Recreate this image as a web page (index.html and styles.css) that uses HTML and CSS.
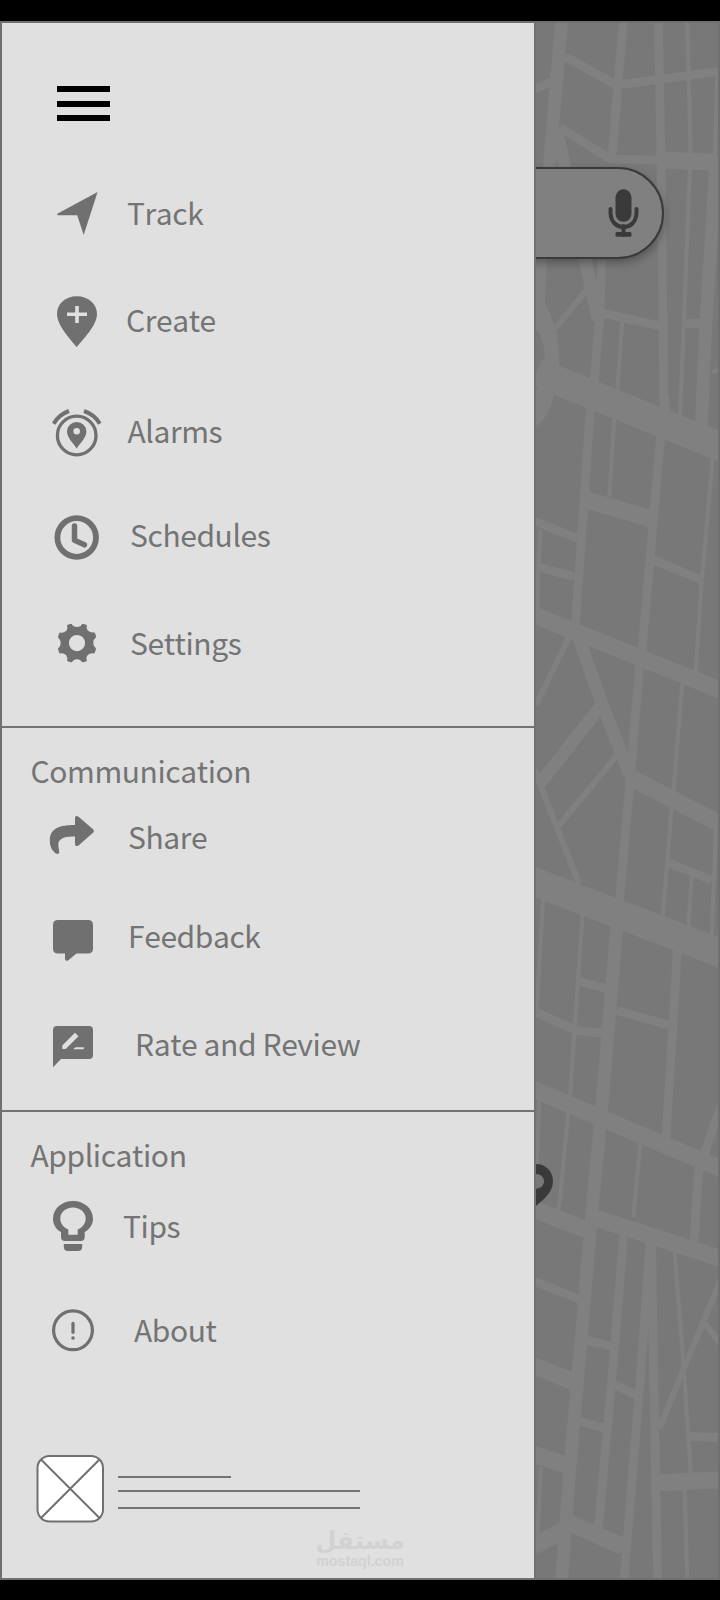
FILE: index.html
```html
<!DOCTYPE html>
<html lang="en">
<head>
<meta charset="utf-8">
<title>Navigation drawer</title>
<link rel="stylesheet" href="styles.css">
</head>
<body>
<div class="screen">
  <nav class="drawer">
    <button class="menu" aria-label="Menu"><span></span><span></span><span></span></button>
    <section class="group main">
      <a class="row track"><svg viewBox="46 182 68 60"><path d="M97.6 192 83.7 235 77.2 215.3H57.3v-1.6z"/></svg><span>Track</span></a>
      <a class="row create"><svg viewBox="46 289 68 60"><path d="M76.7 347C70 339 57 325 57 314c0-10 8-17.8 19.8-17.8S97 304 97 314c0 11-13.500 25-20.300 33z"/><path class="cut" d="M77 306v17M67 314.300h20"/></svg><span>Create</span></a>
      <a class="row alarms"><svg viewBox="46 400 68 60"><circle class="line" cx="76.700" cy="435.500" r="19.300" stroke-width="3.300"/><path class="line" stroke-width="4" d="M53.700 423.700Q59 414.500 69 411M84 411Q94.500 414.500 99.800 423.700"/><path fill-rule="evenodd" d="M76.700 448.500C73.500 443.500 67 437.500 67 431.500a9.700 9.500 0 0 1 19.400 0c0 6-6.500 12-9.700 17zM76.700 428a3.300 3.300 0 1 0 0 6.600 3.300 3.300 0 0 0 0-6.600z"/></svg><span>Alarms</span></a>
      <a class="row schedules"><svg viewBox="46 504 68 60"><circle class="line" cx="76.700" cy="537.500" r="19.300" stroke-width="5.800"/><path class="line round" stroke-width="5.500" d="M74.500 526v14.200l9.900 4.600"/></svg><span>Schedules</span></a>
      <a class="row settings"><svg viewBox="46 612 68 60"><path fill-rule="evenodd" d="M66.800 625.400Q69 623.800 71.800 624Q73 627 77 627Q81 627 82 624Q85 623.800 87 625.400Q85.700 628.200 87.800 630.500Q91 633.300 94.600 632.400Q96 634.600 96 637.300Q93.300 639.200 93.300 643Q93.300 646.500 96 648.300Q95.700 651 94.300 653.500Q90.500 652.500 87.800 655Q85.500 657.800 87 660.700Q84.700 662.300 82 662.200Q80.500 659.300 77 659.300Q73.500 659.300 72 662.200Q69.300 662.300 67 660.700Q68 657.500 66 655Q63.500 652.500 59.700 653.500Q58.200 651.200 58 648.500Q60.700 646.500 60.700 643Q60.700 639.500 58 637.500Q58.200 634.700 59.700 632.400Q63.500 633.300 66 631Q68.400 628.200 66.800 625.400zM77 635a8.100 8.100 0 1 0 0 16.200 8.100 8.100 0 0 0 0-16.200z"/></svg><span>Settings</span></a>
    </section>
    <section class="group communication">
      <h2>Communication</h2>
      <a class="row share"><svg viewBox="46 805 68 60"><path d="M75 825v-7q0-3.200 3.300-1.400L93.300 829.500q1.400 1.600 0 3L78.500 845.500q-3.500 1.500-3.500-1.500v-7.400C64 836 58 839 58.300 845c.1 3 1 5 1 7.500q-1 2.300-3.500 1C51 850 49.800 845 49.800 840 50 828 60 825 75 825z"/></svg><span>Share</span></a>
      <a class="row feedback"><svg viewBox="46 905 68 60"><path d="M58 920h30q5 0 5 5v23.500q0 5-5 5H76.500l-8.500 7q-3 1-3-1.500v-5.500h-7q-5 0-5-5V925q0-5 5-5z"/></svg><span>Feedback</span></a>
      <a class="row review"><svg viewBox="46 1013 68 60"><path d="M57 1026h32q4 0 4 4v25q0 4-4 4H61l-8 8.300V1030q0-4 4-4z"/><path class="light" d="m62.300 1045.500 12.700-12.700 3.500 3.400-12.800 12.800h-3.400zM75.500 1047.300h8.300v2h-10.600z"/></svg><span>Rate and Review</span></a>
    </section>
    <section class="group application">
      <h2>Application</h2>
      <a class="row tips"><svg viewBox="46 1195 68 60"><path fill-rule="evenodd" d="M73 1201c11 0 20 7.500 20 17.700 0 6-3.500 10.500-8.300 13.300v5q0 4-4 4H65q-4 0-4-4v-5c-5-2.800-8-7.300-8-13.300 0-10.200 9-17.700 20-17.700zm0 6.500c-7.500 0-12.700 5-12.700 11 0 5.500 4 9.500 8 11v5.200h9.400v-5.200c4-1.500 8-5.500 8-11 0-6-5.200-11-12.700-11z"/><path d="M63.800 1244h18.400v2.500q0 4.500-4.500 4.500h-9.400q-4.500 0-4.500-4.500z"/></svg><span>Tips</span></a>
      <a class="row about"><svg viewBox="46 1299 68 60"><circle class="line" cx="73" cy="1330.300" r="19.400" stroke-width="3.200"/><path class="line round" stroke-width="3.200" d="M73 1323.300v9"/><circle cx="73" cy="1338" r="1.800"/></svg><span>About</span></a>
    </section>
    <div class="profile">
      <svg viewBox="0 0 68 68"><rect x="1.500" y="1" width="65.500" height="65.500" rx="12"/><path d="m5 4.500 58.500 58.500M63.500 4.500 5 63"/></svg>
      <div class="lines"><i class="short"></i><i></i><i class="last"></i></div>
    </div>
    <div class="watermark"><b lang="ar" dir="rtl">مستقل</b><span>mostaql.com</span></div>
  </nav>
  <main class="map">
    <svg class="streets" viewBox="48 69 546 4665">
      <path class="area" d="M48 780H80L75 910Q105 970 112 1010Q118 1060 117 1100L98 1200Q80 1260 48 1278z"/>
      <path class="block" d="M48 988Q75 1020 75 1080T48 1172z"/>
      <g class="w88"><path d="M50 1116 610 1344M30 2641 610 2862"/></g>
      <g class="w52"><path d="M430 480 600 488M200 1500 392 1556M40 1844 610 2074M325 2330 610 2476M30 3264 610 3509M40 3627 200 3690M200 3645 610 3778M40 4097 160 4145M40 4363 140 4395M40 4639 140 4586M150 4570 310 4640M415 4448 610 4439"/></g>
      <g class="w38"><path d="M125 60 62 800M110 390 215 870 235 960M587 500 556 1000 542 1320M175 1910 245 2110 330 2325M245 2115 60 2350M290 2780 245 3330 218 3610 185 4000 150 4400 125 4740"/></g>
      <g class="w26"><path d="M40 268 95 245M135 170 290 255 610 213M310 60 275 480M415 60 423 480 432 1230M120 382 270 477 420 480M490 970 550 970M245 780 240 930 222 1150M250 940 430 980M212 1215 165 1890M422 1310 365 1960M360 1980 325 2400 298 2710M400 1680 545 1740M40 1562 172 1615M55 1702 163 1730M445 2588 575 2640M180 2945 258 2965M40 3032 165 3090 247 3101M290 3032 450 3076M472 2850 438 3415M537 3495 522 3725M602 3320 550 3470M312 3685 285 4030 235 4585M390 3720 365 4080 312 4740M395 3715 400 4080 413 4740M40 3842 178 3898M200 4021 275 4039M285 4154 348 4185M180 4264 252 4284M510 4309 600 4313M435 1190V1230"/></g>
      <g class="w18"><path d="M200 870 105 985M150 1905 48 2115M292 2265 180 2400 110 2485M45 2310 78 2400 177 2650M555 3970 605 4035M602 3840 490 4110 418 4285"/></g>
      <g class="w12"><path d="M502 60 512 480M592 220 585 470M510 500 490 1000 480 1250M307 960 292 1170M283 1250 268 1490M579 1370 545 1740 527 2015M62 1590 55 1700 52 1825M487 2045 460 2380M455 2425 428 2750M515 2630 505 2780M588 2480 575 2810M70 2690 50 3025M188 2740 150 3285M58 3300 50 3500M145 3335 120 3600 115 3635M362 3425 345 3600 340 3650M463 3745 492 4110 512 4420M63 4400 52 4605M494 4465 502 4740M575 1118 600 1105"/></g>
      <path class="pin" fill-rule="evenodd" d="M48 3492C78 3492 99 3515 99 3543C99 3572 80 3592 48 3618zM48 3522V3566C63 3566 72 3556 72 3544S63 3522 48 3522z"/>
    </svg>
    <div class="search">
      <svg viewBox="0 0 32 50"><rect x="7.500" y="1.300" width="16" height="32.500" rx="8"/><path d="M2.500 21v3c0 10 6 15 13 15s13-5 13-15v-3"/><path d="M15.500 38v9"/><rect x="7.500" y="44" width="16" height="4.700" rx="1.500"/></svg>
    </div>
  </main>
</div>
</body>
</html>
```

FILE: styles.css
```css
* { box-sizing: border-box; }
body { margin: 0; background: #000; }
.screen {
  width: 720px;
  height: 1600px;
  padding: 21px 0 20px;
  display: flex;
  background: #000;
}
.drawer {
  width: 536px;
  height: 1559px;
  border: 2px solid #707070;
  border-right-color: #727272;
  background: #e0e0e0;
  display: flex;
  flex-direction: column;
  font-family: "Noto Sans CJK SC", "Noto Sans", sans-serif;
  font-size: 30px;
  font-weight: 400;
  font-kerning: none;
  letter-spacing: -.4px;
  color: #747474;
}
.menu {
  display: flex;
  flex-direction: column;
  gap: 8.5px;
  margin: 63px 0 0 55px;
  padding: 0;
  width: 53px;
  height: 35px;
  border: 0;
  background: none;
}
.menu span { width: 53px; height: 6px; flex: none; background: #000; }
.group { flex: none; display: flex; flex-direction: column; }
.main { height: 607px; padding-top: 61px; border-bottom: 2px solid #747474; }
.communication { height: 384px; padding-top: 22px; border-bottom: 2px solid #747474; }
.application { height: 343px; padding-top: 22px; }
h2 {
  margin: 0 0 0 28.5px;
  font: inherit;
  line-height: 40px;
  height: 40px;
}
.row {
  display: flex;
  flex: none;
  height: 60px;
  padding-left: 44px;
  line-height: 60px;
  white-space: nowrap;
}
.row svg { width: 68px; height: 60px; flex: none; fill: #707070; }
.row .line { fill: none; stroke: #707070; }
.row .round { stroke-linecap: round; stroke-linejoin: round; }
.row .cut { fill: none; stroke: #e0e0e0; stroke-width: 3.6; }
.row .light { fill: #e0e0e0; }
.row span { margin-left: 13px; }
.create { margin-top: 47px; }
.create span { margin-left: 12px; }
.alarms { margin-top: 51px; }
.alarms span { margin-left: 13.5px; }
.schedules { margin-top: 44px; }
.settings { margin-top: 48px; }
.schedules span, .settings span { margin-left: 16px; }
.share { margin-top: 15px; }
.share span, .feedback span { margin-left: 14px; }
.share span { padding-top: 1px; }
.feedback { margin-top: 40px; }
.row.review { margin-top: 48px; }
.review span { margin-left: 21px; }
.tips { margin-top: 21px; }
.tips span { margin-left: 9px; }
.about { margin-top: 44px; }
.about span { margin-left: 20px; }
.profile { display: flex; height: 68px; flex: none; margin: 0 0 0 34px; }
.profile svg { width: 68px; height: 68px; fill: #fff; stroke: #707070; stroke-width: 2; }
.lines { margin: 21px 0 0 14px; }
.lines i { display: block; width: 242px; height: 2px; margin-bottom: 12px; background: #747474; }
.lines .short { width: 113px; }
.lines .last { margin-top: 15px; }
.watermark {
  width: 88px;
  margin: 5px 0 0 314px;
  color: #d2d2d2;
  letter-spacing: 0;
  display: flex;
  flex-direction: column;
  align-items: center;
}
.watermark b { font: bold 24.5px/25px "DejaVu Sans", sans-serif; }
.watermark span { font: bold 14.2px/16px "Liberation Sans", sans-serif; }
.map {
  position: relative;
  width: 184px;
  height: 1559px;
  border: solid #707070;
  border-width: 2px 2px 2px 0;
  background: #787878;
  overflow: hidden;
}
.streets { display: block; width: 182px; height: 1555px; fill: none; stroke: #808080; }
.streets .area { fill: #808080; stroke: none; }
.streets .block { fill: #787878; stroke: none; }
.streets .pin { fill: #3a3a3a; stroke: none; }
.w88 { stroke-width: 86px; }
.w52 { stroke-width: 51px; }
.w38 { stroke-width: 38px; }
.w26 { stroke-width: 26px; }
.w18 { stroke-width: 18px; }
.w12 { stroke-width: 12px; }
.search {
  position: absolute;
  top: 144px;
  left: -60px;
  width: 188px;
  height: 92px;
  padding: 19px 22.5px 0 0;
  border: 2px solid #3a3a3a;
  border-radius: 46px;
  background: #808080;
  box-shadow: 0 4px 8px rgba(0, 0, 0, .3);
  display: flex;
  justify-content: flex-end;
}
.search svg { width: 32px; height: 50px; fill: #3a3a3a; }
.search path { fill: none; stroke: #3a3a3a; stroke-width: 4; stroke-linecap: round; }
```
